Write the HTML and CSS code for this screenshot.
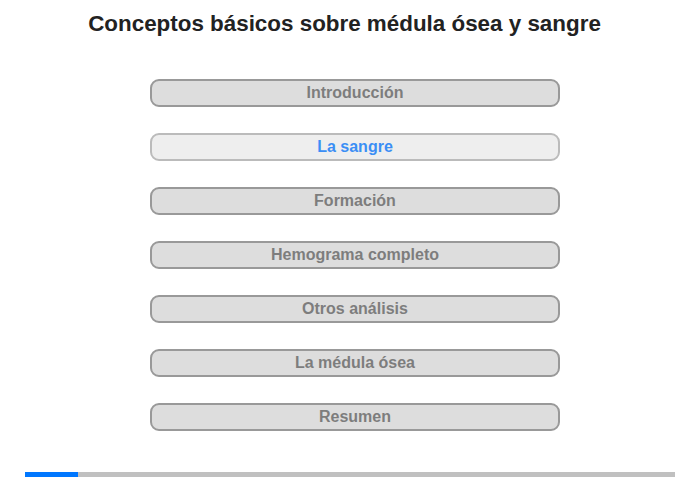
FILE: index.html
```html
<!DOCTYPE html>
<html lang="es">
<head>
<meta charset="utf-8">
<title>Conceptos básicos sobre médula ósea y sangre</title>
<link rel="stylesheet" href="styles.css">
</head>
<body>
<div class="page">
  <h1 class="title">Conceptos básicos sobre médula ósea y sangre</h1>
  <nav class="menu">
    <div class="item">Introducción</div>
    <div class="item active">La sangre</div>
    <div class="item">Formación</div>
    <div class="item">Hemograma completo</div>
    <div class="item">Otros análisis</div>
    <div class="item">La médula ósea</div>
    <div class="item">Resumen</div>
  </nav>
  <div class="progress"><div class="progress-fill" style="width:53px"></div></div>
</div>
</body>
</html>
```
FILE: styles.css
```css
html, body {
  margin: 0;
  padding: 0;
  background: #fff;
}
.page {
  width: 700px;
  height: 480px;
  display: flex;
  flex-direction: column;
  font-family: "Liberation Sans", Arial, sans-serif;
}
.title {
  margin: 10px 0 0 0;
  padding-right: 11px;
  font-size: 22.4px;
  line-height: 28px;
  font-weight: bold;
  color: #222;
  text-align: center;
}
.menu {
  margin: 41px 0 0 150px;
  width: 410px;
  display: flex;
  flex-direction: column;
  gap: 26px;
}
.item {
  box-sizing: border-box;
  height: 28px;
  border: 2px solid #999;
  border-radius: 9px;
  background: #ddd;
  color: #7d7d7d;
  font-size: 16px;
  font-weight: bold;
  line-height: 24px;
  text-align: center;
}
.item.active {
  background: #eee;
  border-color: #bbb;
  color: #3b8ef5;
}
.progress {
  margin: 41px 0 0 25px;
  width: 650px;
  height: 5px;
  background: #c0c0c0;
}
.progress-fill {
  height: 100%;
  background: #0077ff;
}
```
